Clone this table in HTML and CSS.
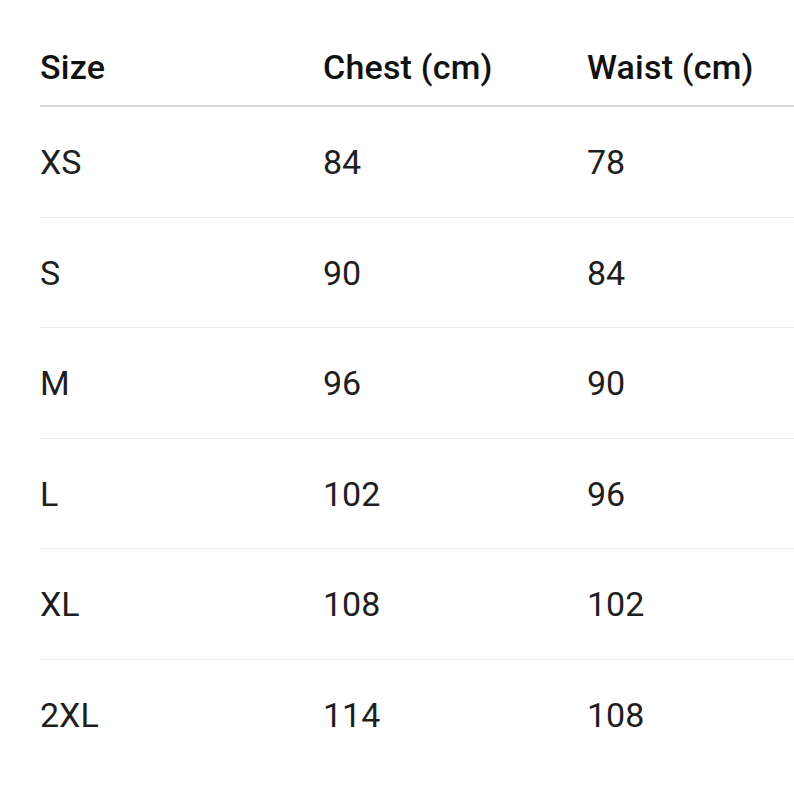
FILE: index.html
```html
<!DOCTYPE html>
<html lang="en">
<head>
<meta charset="utf-8">
<title>Size chart</title>
<link rel="stylesheet" href="styles.css">
</head>
<body>
<div class="chart">
  <table class="size-table">
    <thead>
      <tr><th>Size</th><th>Chest (cm)</th><th>Waist (cm)</th></tr>
    </thead>
    <tbody>
      <tr><td>XS</td><td>84</td><td>78</td></tr>
      <tr><td>S</td><td>90</td><td>84</td></tr>
      <tr><td>M</td><td>96</td><td>90</td></tr>
      <tr><td>L</td><td>102</td><td>96</td></tr>
      <tr><td>XL</td><td>108</td><td>102</td></tr>
      <tr><td>2XL</td><td>114</td><td>108</td></tr>
    </tbody>
  </table>
</div>
</body>
</html>
```

FILE: styles.css
```css
html, body {
  margin: 0;
  padding: 0;
  background: #ffffff;
}
body {
  font-family: Roboto, "Liberation Sans", sans-serif;
  color: #1b1b1b;
  overflow: hidden;
}
.chart {
  padding: 28px 0 0 40px;
}
.size-table {
  width: 754px;
  border-collapse: collapse;
  table-layout: fixed;
}
.size-table th,
.size-table td {
  text-align: left;
  padding: 0;
  font-size: 34px;
  line-height: 40px;
}
.size-table th:nth-child(1) { width: 283px; }
.size-table th:nth-child(2) { width: 264px; }
.size-table th {
  font-weight: 500;
  color: #111111;
  letter-spacing: 0.2px;
  padding: 19px 0 18px;
  border-bottom: 2px solid #d6d6d6;
}
.size-table td {
  font-weight: 400;
  color: #1e1e1e;
  padding: 35px 0 34.6px;
  border-bottom: 1px solid #ececec;
}
.size-table tbody tr:last-child td {
  border-bottom: none;
}
```
